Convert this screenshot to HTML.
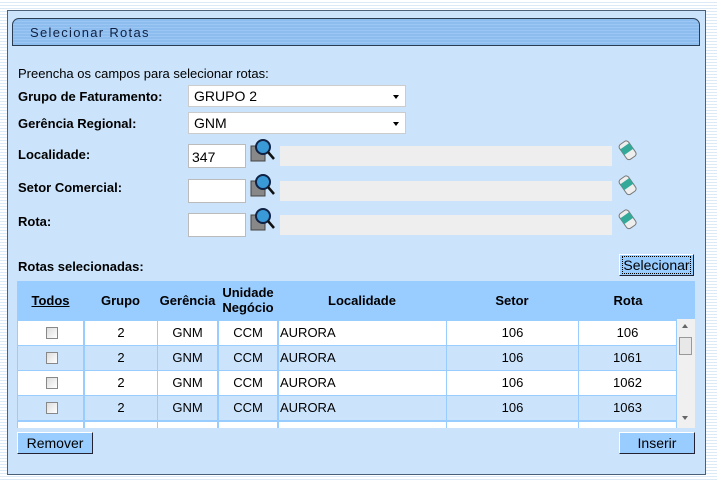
<!DOCTYPE html>
<html><head><meta charset="utf-8"><style>
*{box-sizing:border-box}
body{margin:0;width:717px;height:482px;overflow:hidden;background:repeating-linear-gradient(180deg,#fff 0,#fff 2px,#dce9f7 2px,#dce9f7 3px);font-family:"Liberation Sans",Arial,sans-serif;font-size:13px;color:#000;position:relative}
.panel{position:absolute;left:7px;top:10px;width:699px;height:465px;background:#cbe4fb;border:1px solid #4a6079}
.hdr{position:absolute;left:12px;top:18px;width:688px;height:28px;border:1px solid #2b3d52;border-radius:7px 7px 0 0;background:repeating-linear-gradient(180deg,#8dbcef 0,#8dbcef 2px,#9cc6f3 2px,#9cc6f3 3px);font-size:13px;letter-spacing:1.3px;padding:6px 0 0 17px;color:#102040}
.abs{position:absolute}
.lbl{position:absolute;left:18px;font-weight:bold;font-size:13px}
.sel{position:absolute;left:188px;width:218px;height:22px;background:#fff;border:1px solid #ccc;font-size:14px;padding:2px 5px}
.sel:after{content:"";position:absolute;right:6px;top:9px;border-left:3.5px solid transparent;border-right:3.5px solid transparent;border-top:4px solid #000}
.inp{position:absolute;left:188px;width:58px;height:24px;background:#fff;border:1px solid #bbb;font-size:14px;padding:4px 3px}
.dis{position:absolute;left:280px;width:332px;height:20px;background:#eee}
.btn{position:absolute;height:22px;background:#99ccff;border:1px solid #223;border-top-color:#fff;border-left-color:#fff;font-size:14px;text-align:center;line-height:20px}
table{border-collapse:separate;border-spacing:0}
.tbl{position:absolute;left:17px;top:281px;width:678px;height:147px;background:#99ccff;overflow:hidden}
.th{position:absolute;top:0;height:38px;font-weight:bold;font-size:13px;text-align:center;display:flex;align-items:center;justify-content:center;line-height:15px}
.row{position:absolute;left:0;width:660px;height:24px}
.c{position:absolute;top:0;height:24px;line-height:24px;text-align:center;font-size:13px}
.cb{position:absolute;left:28px;top:6px;width:12px;height:12px;border:1px solid #888;background:linear-gradient(135deg,#ddd,#fff)}
</style></head><body>
<div class="panel"></div>
<div class="hdr">Selecionar Rotas</div>
<div class="abs" style="left:18px;top:66px;font-size:13px">Preencha os campos para selecionar rotas:</div>
<div class="lbl" style="top:89px">Grupo de Faturamento:</div>
<div class="sel" style="top:85px">GRUPO 2</div>
<div class="lbl" style="top:116px">Gerência Regional:</div>
<div class="sel" style="top:112px">GNM</div>
<div class="lbl" style="top:147px">Localidade:</div>
<div class="lbl" style="top:180px">Setor Comercial:</div>
<div class="lbl" style="top:214px">Rota:</div>
<div class="inp" style="top:144px">347</div>
<div class="inp" style="top:179px"></div>
<div class="inp" style="top:213px"></div>
<div class="dis" style="top:146px"></div>
<div class="dis" style="top:181px"></div>
<div class="dis" style="top:215px"></div>
<svg class="abs" style="left:250px;top:138px" width="26" height="26"><rect x="1" y="8" width="14" height="15" fill="#888" stroke="#444"/><circle cx="13" cy="9" r="7" fill="#3a9ad8" stroke="#124" stroke-width="2"/><line x1="18" y1="14" x2="24" y2="21" stroke="#111" stroke-width="2.5"/></svg>
<svg class="abs" style="left:250px;top:173px" width="26" height="26"><rect x="1" y="8" width="14" height="15" fill="#888" stroke="#444"/><circle cx="13" cy="9" r="7" fill="#3a9ad8" stroke="#124" stroke-width="2"/><line x1="18" y1="14" x2="24" y2="21" stroke="#111" stroke-width="2.5"/></svg>
<svg class="abs" style="left:250px;top:207px" width="26" height="26"><rect x="1" y="8" width="14" height="15" fill="#888" stroke="#444"/><circle cx="13" cy="9" r="7" fill="#3a9ad8" stroke="#124" stroke-width="2"/><line x1="18" y1="14" x2="24" y2="21" stroke="#111" stroke-width="2.5"/></svg>
<svg class="abs" style="left:617px;top:139px" width="22" height="22"><g transform="rotate(-35 11 11)"><rect x="5" y="2" width="11" height="18" rx="3" fill="#eee" stroke="#777"/><rect x="5" y="6" width="11" height="7" fill="#3a9" /></g></svg>
<svg class="abs" style="left:617px;top:174px" width="22" height="22"><g transform="rotate(-35 11 11)"><rect x="5" y="2" width="11" height="18" rx="3" fill="#eee" stroke="#777"/><rect x="5" y="6" width="11" height="7" fill="#3a9" /></g></svg>
<svg class="abs" style="left:617px;top:208px" width="22" height="22"><g transform="rotate(-35 11 11)"><rect x="5" y="2" width="11" height="18" rx="3" fill="#eee" stroke="#777"/><rect x="5" y="6" width="11" height="7" fill="#3a9" /></g></svg>
<div class="lbl" style="top:259px">Rotas selecionadas:</div>
<div class="btn" style="left:619px;top:254px;width:75px;border-color:#fff #223 #223 #fff"><span style="outline:1px dotted #000">Selecionar</span></div>
<div class="tbl">
<div class="th" style="left:0;width:67px"><u>Todos</u></div>
<div class="th" style="left:67px;width:73px">Grupo</div>
<div class="th" style="left:140px;width:61px">Gerência</div>
<div class="th" style="left:201px;width:60px">Unidade<br>Negócio</div>
<div class="th" style="left:261px;width:168px">Localidade</div>
<div class="th" style="left:429px;width:132px">Setor</div>
<div class="th" style="left:561px;width:100px">Rota</div>
<div style="position:absolute;left:660px;top:38px;width:18px;height:109px;background:#f0f0f0"><div style="position:absolute;left:2px;top:18px;width:13px;height:18px;border:1px solid #999;background:#e8e8e8"></div><div style="position:absolute;left:5px;top:5px;border-left:3px solid transparent;border-right:3px solid transparent;border-bottom:4px solid #666"></div><div style="position:absolute;left:5px;top:97px;border-left:3px solid transparent;border-right:3px solid transparent;border-top:4px solid #666"></div></div>
<!-- rows -->
<div class="row" style="top:40px"><div class="c" style="left:1px;width:65px;background:#fff"><div class="cb"></div></div><div class="c" style="left:68px;width:72px;background:#fff">2</div><div class="c" style="left:141px;width:59px;background:#fff">GNM</div><div class="c" style="left:202px;width:58px;background:#fff">CCM</div><div class="c" style="left:262px;width:167px;background:#fff;text-align:left;padding-left:1px">AURORA</div><div class="c" style="left:430px;width:131px;background:#fff">106</div><div class="c" style="left:562px;width:97px;background:#fff">106</div></div>
<div class="row" style="top:65px"><div class="c" style="left:1px;width:65px;background:#cce4fb"><div class="cb"></div></div><div class="c" style="left:68px;width:72px;background:#cce4fb">2</div><div class="c" style="left:141px;width:59px;background:#cce4fb">GNM</div><div class="c" style="left:202px;width:58px;background:#cce4fb">CCM</div><div class="c" style="left:262px;width:167px;background:#cce4fb;text-align:left;padding-left:1px">AURORA</div><div class="c" style="left:430px;width:131px;background:#cce4fb">106</div><div class="c" style="left:562px;width:97px;background:#cce4fb">1061</div></div>
<div class="row" style="top:90px"><div class="c" style="left:1px;width:65px;background:#fff"><div class="cb"></div></div><div class="c" style="left:68px;width:72px;background:#fff">2</div><div class="c" style="left:141px;width:59px;background:#fff">GNM</div><div class="c" style="left:202px;width:58px;background:#fff">CCM</div><div class="c" style="left:262px;width:167px;background:#fff;text-align:left;padding-left:1px">AURORA</div><div class="c" style="left:430px;width:131px;background:#fff">106</div><div class="c" style="left:562px;width:97px;background:#fff">1062</div></div>
<div class="row" style="top:115px"><div class="c" style="left:1px;width:65px;background:#cce4fb"><div class="cb"></div></div><div class="c" style="left:68px;width:72px;background:#cce4fb">2</div><div class="c" style="left:141px;width:59px;background:#cce4fb">GNM</div><div class="c" style="left:202px;width:58px;background:#cce4fb">CCM</div><div class="c" style="left:262px;width:167px;background:#cce4fb;text-align:left;padding-left:1px">AURORA</div><div class="c" style="left:430px;width:131px;background:#cce4fb">106</div><div class="c" style="left:562px;width:97px;background:#cce4fb">1063</div></div>
<div class="row" style="top:141px"><div class="c" style="left:1px;width:65px;background:#fff"><div class="cb"></div></div><div class="c" style="left:68px;width:72px;background:#fff"></div><div class="c" style="left:141px;width:59px;background:#fff"></div><div class="c" style="left:202px;width:58px;background:#fff"></div><div class="c" style="left:262px;width:167px;background:#fff"></div><div class="c" style="left:430px;width:131px;background:#fff"></div><div class="c" style="left:562px;width:97px;background:#fff"></div></div>
</div>
<div class="btn" style="left:17px;top:432px;width:76px;border-color:#fff #223 #223 #fff">Remover</div>
<div class="btn" style="left:619px;top:432px;width:76px;border-color:#fff #223 #223 #fff">Inserir</div>
</body></html>
